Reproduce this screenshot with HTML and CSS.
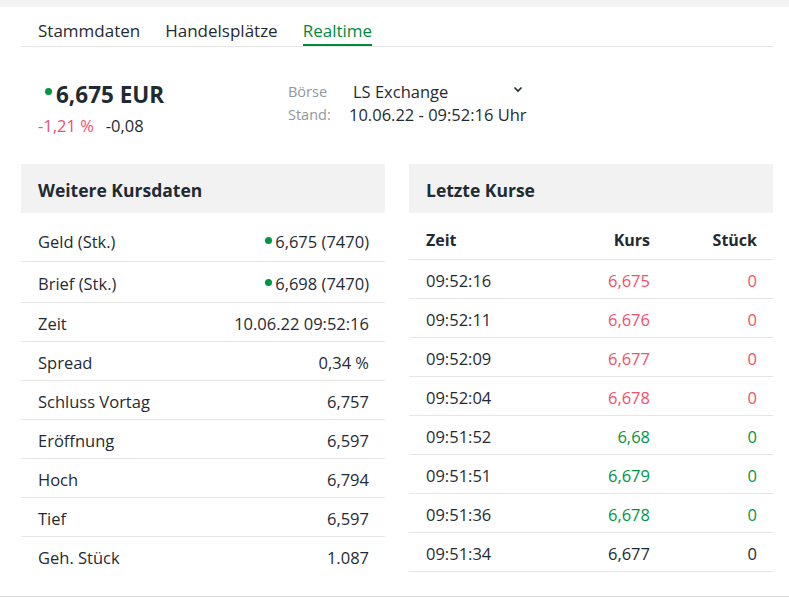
FILE: index.html
```html
<!DOCTYPE html>
<html>
<head>
    <meta charset="UTF-8">
    <title>Realtime</title>
    <link rel="stylesheet" href="styles.css">
</head>
<body>
    <div class="topbar"></div>
    <div class="page">
        <div class="tabs">
            <span class="tab">Stammdaten</span>
            <span class="tab">Handelsplätze</span>
            <span class="tab active">Realtime</span>
        </div>

        <div class="quote">
            <div class="quote-main">
                <div class="price"><span class="dot"></span>6,675 EUR</div>
                <div class="change">
                    <span class="neg">-1,21 %</span>
                    <span>-0,08</span>
                </div>
            </div>
            <div class="quote-info">
                <div class="info-row">
                    <span class="info-label">Börse</span>
                    <span class="exchange">LS Exchange
                        <svg class="chevron" width="10" height="7" viewBox="0 0 10 7"><path d="M1.5 1.5 L5 5 L8.5 1.5" fill="none" stroke="#1f2b33" stroke-width="1.6"/></svg>
                    </span>
                </div>
                <div class="info-row">
                    <span class="info-label">Stand:</span>
                    <span class="info-value">10.06.22 - 09:52:16 Uhr</span>
                </div>
            </div>
        </div>

        <div class="panels">
            <div class="panel">
                <div class="panel-head">Weitere Kursdaten</div>
                <table class="data">
                    <tr class="first"><td>Geld (Stk.)</td><td class="num"><span class="dot small"></span>6,675 (7470)</td></tr>
                    <tr><td>Brief (Stk.)</td><td class="num"><span class="dot small"></span>6,698 (7470)</td></tr>
                    <tr><td>Zeit</td><td class="num">10.06.22 09:52:16</td></tr>
                    <tr><td>Spread</td><td class="num">0,34 %</td></tr>
                    <tr><td>Schluss Vortag</td><td class="num">6,757</td></tr>
                    <tr><td>Eröffnung</td><td class="num">6,597</td></tr>
                    <tr><td>Hoch</td><td class="num">6,794</td></tr>
                    <tr><td>Tief</td><td class="num">6,597</td></tr>
                    <tr class="last"><td>Geh. Stück</td><td class="num">1.087</td></tr>
                </table>
            </div>
            <div class="panel">
                <div class="panel-head">Letzte Kurse</div>
                <table class="data trades">
                    <tr class="head"><th>Zeit</th><th class="num">Kurs</th><th class="num">Stück</th></tr>
                    <tr class="neg"><td>09:52:16</td><td class="num">6,675</td><td class="num">0</td></tr>
                    <tr class="neg"><td>09:52:11</td><td class="num">6,676</td><td class="num">0</td></tr>
                    <tr class="neg"><td>09:52:09</td><td class="num">6,677</td><td class="num">0</td></tr>
                    <tr class="neg"><td>09:52:04</td><td class="num">6,678</td><td class="num">0</td></tr>
                    <tr class="pos"><td>09:51:52</td><td class="num">6,68</td><td class="num">0</td></tr>
                    <tr class="pos"><td>09:51:51</td><td class="num">6,679</td><td class="num">0</td></tr>
                    <tr class="pos"><td>09:51:36</td><td class="num">6,678</td><td class="num">0</td></tr>
                    <tr><td>09:51:34</td><td class="num">6,677</td><td class="num">0</td></tr>
                </table>
            </div>
        </div>
    </div>
    <div class="footer"></div>
</body>
</html>
```

FILE: styles.css
```css
body {
    margin: 0;
    font-family: "Open Sans", "Liberation Sans", sans-serif;
    font-size: 16.5px;
    color: #1f2b33;
    background: #fff;
    overflow: hidden;
    height: 597px;
}
.topbar {
    height: 7px;
    background-color: #f2f2f2;
}
.page {
    width: 752px;
    margin-left: 21px;
}
.tabs {
    display: flex;
    gap: 25px;
    padding: 13px 0 0 17px;
    border-bottom: 1px solid #e6e6e6;
    height: 26px;
    font-size: 17px;
}
.tab {
    line-height: 22px;
    height: 24px;
}
.tab.active {
    color: #008a3c;
    border-bottom: 2px solid #008a3c;
}
.quote {
    display: flex;
    padding: 33px 0 0 17px;
    height: 84px;
}
.quote-main {
    width: 250px;
    flex-shrink: 0;
}
.price {
    font-size: 22.5px;
    font-weight: 700;
    line-height: 30px;
    display: flex;
    align-items: center;
}
.dot {
    display: inline-block;
    width: 7px;
    height: 7px;
    border-radius: 50%;
    background-color: #00963f;
    margin: 0 4px 7px 7px;
}
.dot.small {
    margin: 0 3px 4px 0;
}
.change {
    margin-top: 4px;
    display: flex;
    gap: 12px;
}
.neg .num, .change .neg {
    color: #f2506b;
}
.pos .num {
    color: #00963f;
}
.info-row {
    display: flex;
    line-height: 23px;
}
.info-label {
    width: 61px;
    color: #8f989e;
    font-size: 14.5px;
}
.exchange {
    display: flex;
    align-items: center;
    width: 170px;
    padding-left: 4px;
    justify-content: space-between;
}
.chevron {
    margin-bottom: 4px;
}
.panels {
    display: flex;
    gap: 24px;
}
.panel {
    flex: 1;
}
.panel-head {
    background-color: #f2f2f2;
    height: 49px;
    line-height: 52px;
    padding-left: 17px;
    font-size: 17.5px;
    font-weight: 700;
}
.data {
    width: 100%;
    border-collapse: collapse;
}
.data td, .data th {
    padding: 2px 16px 0 17px;
    height: 36px;
    border-bottom: 1px solid #e6e6e6;
    text-align: left;
    white-space: nowrap;
}
.data th {
    font-weight: 700;
    font-size: 16px;
    height: 38px;
    padding-top: 8px;
}
.data .num {
    text-align: right;
}
.data tr.first td {
    height: 40px;
    padding-top: 8px;
}
.data tr:nth-child(2) td {
    height: 38px;
}
.trades tr:nth-child(2) td {
    height: 35px;
    padding-top: 3px;
}
.data tr.last td {
    border-bottom: none;
}
.trades td:nth-child(2), .trades th:nth-child(2) {
    width: 90px;
    padding-right: 0;
}
.trades td:nth-child(3), .trades th:nth-child(3) {
    width: 107px;
    padding-left: 0;
}
.footer {
    border-top: 2px solid #d9d9d9;
    margin-top: 21px;
}
```
